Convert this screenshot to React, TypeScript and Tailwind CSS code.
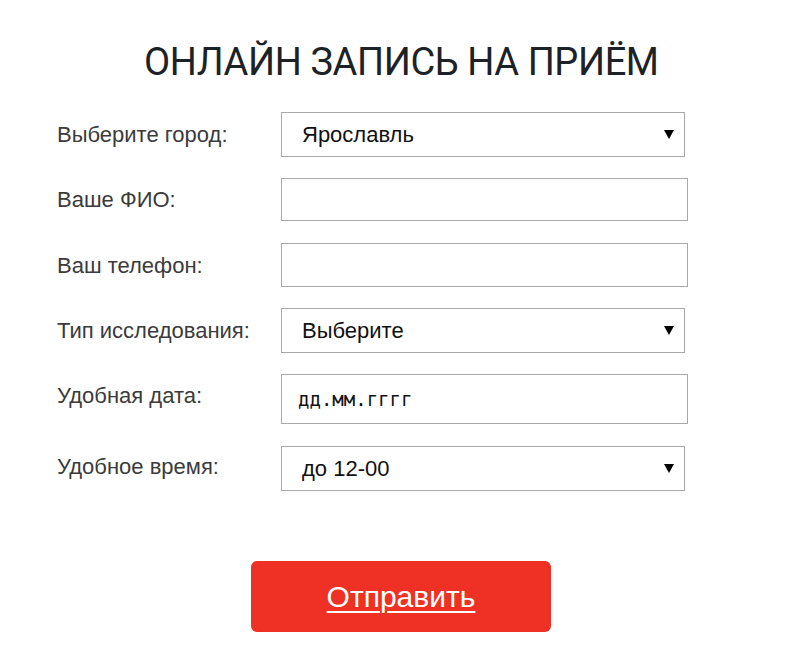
import React from "react";

const Arrow = () => (
  <svg width="10" height="9" viewBox="0 0 10 9" className="shrink-0">
    <polygon points="0,0 10,0 5,9" fill="#000" />
  </svg>
);

const Select = ({ value }: { value: string }) => (
  <div className="flex h-[45px] w-[404px] items-center justify-between border border-[#a9a9a9] bg-white pl-[20px] pr-[10px] text-[22px] text-[#111]" style={{ fontFamily: '"Liberation Sans", Arial, sans-serif' }}>
    <span>{value}</span>
    <Arrow />
  </div>
);

const Input = ({ h, children }: { h: string; children?: React.ReactNode }) => (
  <div className={`flex w-[407px] items-center border border-[#a9a9a9] bg-white pl-[16px] ${h}`}>{children}</div>
);

const Label = ({ children }: { children: React.ReactNode }) => (
  <div className="w-[224px] shrink-0 text-[22px] text-[#3b3b3b]" style={{ fontFamily: '"Liberation Sans", Arial, sans-serif' }}>
    {children}
  </div>
);

export default function App() {
  return (
    <div className="h-[652px] w-[785px] bg-white">
      <h1 className="pt-[37px] pl-[144px] text-[38px] leading-[50px] tracking-[-0.4px] text-[#1d2227]" style={{ fontFamily: 'Roboto, "Liberation Sans", sans-serif' }}>
        ОНЛАЙН ЗАПИСЬ НА ПРИЁМ
      </h1>
      <div className="mt-[25px] flex flex-col pl-[57px]">
        <div className="flex items-center">
          <Label>Выберите город:</Label>
          <Select value="Ярославль" />
        </div>
        <div className="mt-[21px] flex items-center">
          <Label>Ваше ФИО:</Label>
          <Input h="h-[43px]" />
        </div>
        <div className="mt-[22px] flex items-center">
          <Label>Ваш телефон:</Label>
          <Input h="h-[44px]" />
        </div>
        <div className="mt-[21px] flex items-center">
          <Label>Тип исследования:</Label>
          <Select value="Выберите" />
        </div>
        <div className="mt-[21px] flex items-center">
          <Label><span className="relative -top-[4px]">Удобная дата:</span></Label>
          <Input h="h-[50px]">
            <span className="text-[19px] text-[#111]" style={{ fontFamily: '"DejaVu Sans Mono", "Liberation Mono", monospace' }}>дд.мм.гггг</span>
          </Input>
        </div>
        <div className="mt-[22px] flex items-center">
          <Label><span className="relative -top-[2px]">Удобное время:</span></Label>
          <Select value="до 12-00" />
        </div>
      </div>
      <div className="mt-[70px] flex pl-[251px]">
        <button className="flex h-[71px] w-[300px] items-center justify-center rounded-[6px] bg-[#ee3124] text-[30px] text-white underline decoration-[2px] underline-offset-[4px]" style={{ fontFamily: '"Liberation Sans", Arial, sans-serif' }}>
          Отправить
        </button>
      </div>
    </div>
  );
}
